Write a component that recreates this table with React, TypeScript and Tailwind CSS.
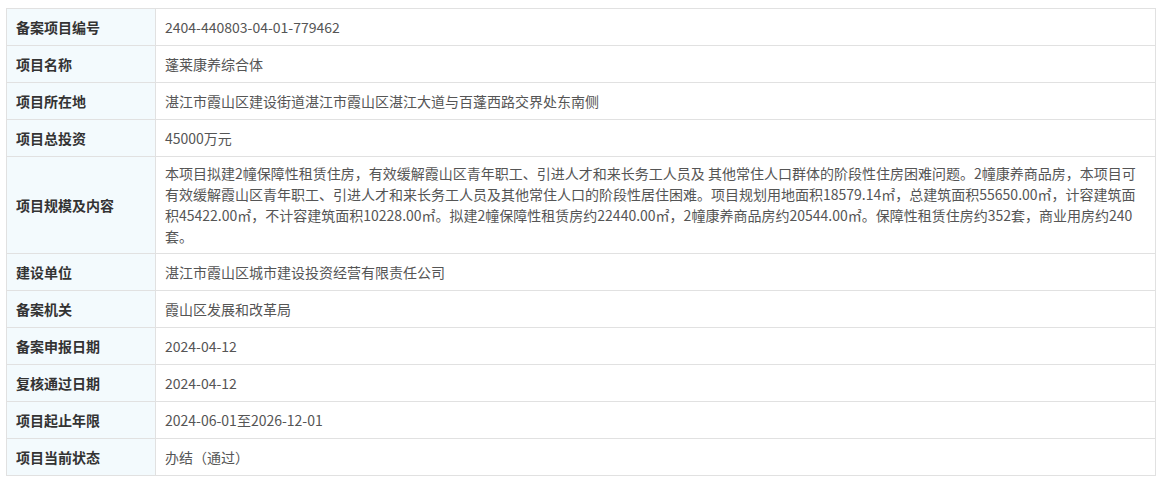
const rows: { label: string; value: string | string[] }[] = [
  { label: "备案项目编号", value: "2404-440803-04-01-779462" },
  { label: "项目名称", value: "蓬莱康养综合体" },
  { label: "项目所在地", value: "湛江市霞山区建设街道湛江市霞山区湛江大道与百蓬西路交界处东南侧" },
  { label: "项目总投资", value: "45000万元" },
  {
    label: "项目规模及内容",
    value: [
      "本项目拟建2幢保障性租赁住房，有效缓解霞山区青年职工、引进人才和来长务工人员及 其他常住人口群体的阶段性住房困难问题。2幢康养商品房，本项目可",
      "有效缓解霞山区青年职工、引进人才和来长务工人员及其他常住人口的阶段性居住困难。项目规划用地面积18579.14㎡，总建筑面积55650.00㎡，计容建筑面",
      "积45422.00㎡，不计容建筑面积10228.00㎡。拟建2幢保障性租赁房约22440.00㎡，2幢康养商品房约20544.00㎡。保障性租赁住房约352套，商业用房约240",
      "套。",
    ],
  },
  { label: "建设单位", value: "湛江市霞山区城市建设投资经营有限责任公司" },
  { label: "备案机关", value: "霞山区发展和改革局" },
  { label: "备案申报日期", value: "2024-04-12" },
  { label: "复核通过日期", value: "2024-04-12" },
  { label: "项目起止年限", value: "2024-06-01至2026-12-01" },
  { label: "项目当前状态", value: "办结（通过）" },
];

export default function App() {
  return (
    <div className="min-h-[481px] bg-white pt-[8px] pl-[6px] font-['Microsoft_YaHei','Noto_Sans_CJK_SC',sans-serif] text-[14px]">
      <div className="w-[1150px] border border-[#e1e1e1]">
        {rows.map((row, i) => (
          <div
            key={row.label}
            className={`flex ${i > 0 ? "border-t border-[#e1e1e1]" : ""}`}
          >
            <div className="flex w-[149px] shrink-0 items-center border-r border-[#e1e1e1] bg-[#f3fafd] pl-[9px] font-bold text-[#333]">
              {row.label}
            </div>
            <div
              className={`flex-1 pl-[9px] pr-[10px] leading-[21px] text-[#555] ${
                Array.isArray(row.value) ? "py-[6px]" : "flex h-[36px] items-center"
              }`}
            >
              {Array.isArray(row.value)
                ? row.value.map((line) => (
                    <span key={line} className="block whitespace-nowrap">
                      {line}
                    </span>
                  ))
                : row.value}
            </div>
          </div>
        ))}
      </div>
    </div>
  );
}
